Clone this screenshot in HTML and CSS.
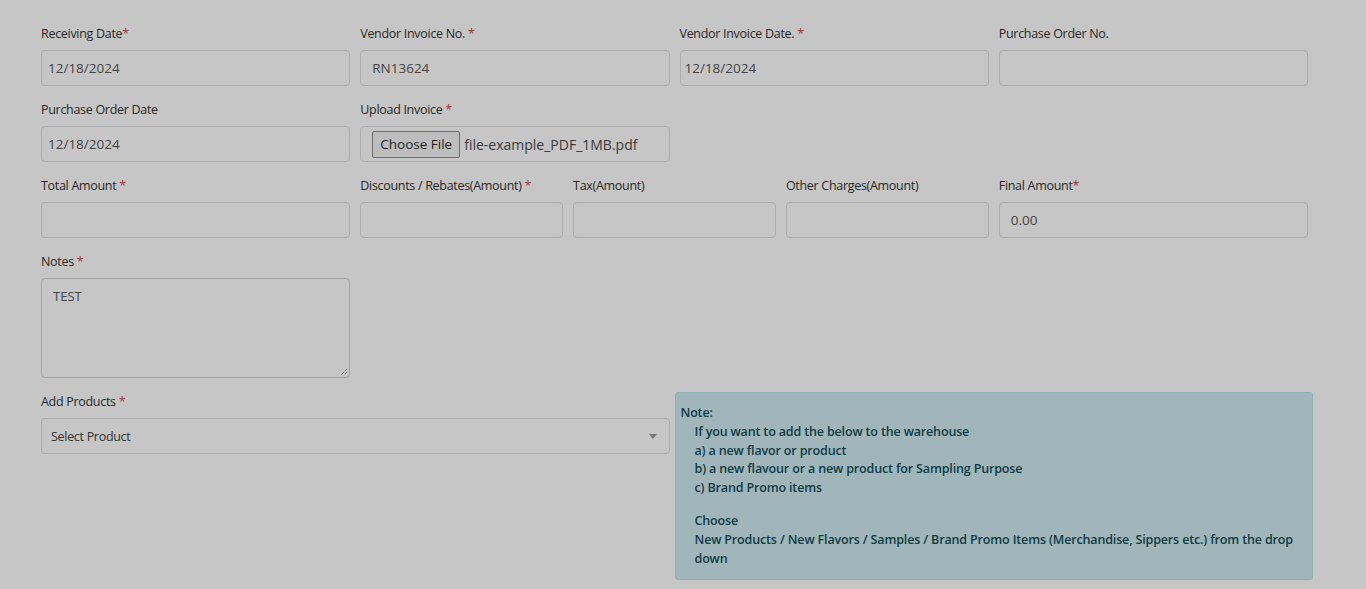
FILE: index.html
```html
<!DOCTYPE html>
<html>
<head>
<meta charset="utf-8">
<link rel="stylesheet" href="styles.css">
</head>
<body>
<div class="page">
  <div class="row">
    <div class="field">
      <label>Receiving Date<span class="req">*</span></label>
      <div class="input">12/18/2024</div>
    </div>
    <div class="field">
      <label>Vendor Invoice No. <span class="req">*</span></label>
      <div class="input pad-l">RN13624</div>
    </div>
    <div class="field">
      <label>Vendor Invoice Date. <span class="req">*</span></label>
      <div class="input tight">12/18/2024</div>
    </div>
    <div class="field">
      <label>Purchase Order No.</label>
      <div class="input"></div>
    </div>
  </div>
  <div class="row">
    <div class="field">
      <label>Purchase Order Date</label>
      <div class="input">12/18/2024</div>
    </div>
    <div class="field">
      <label>Upload Invoice <span class="req">*</span></label>
      <div class="input file"><span class="btn">Choose File</span><span class="fname">file-example_PDF_1MB.pdf</span></div>
    </div>
  </div>
  <div class="row">
    <div class="field">
      <label>Total Amount <span class="req">*</span></label>
      <div class="input"></div>
    </div>
    <div class="field span2">
      <div class="sub3">
        <div class="field">
          <label>Discounts / Rebates(Amount) <span class="req">*</span></label>
          <div class="input"></div>
        </div>
        <div class="field">
          <label>Tax(Amount)</label>
          <div class="input"></div>
        </div>
        <div class="field">
          <label>Other Charges(Amount)</label>
          <div class="input"></div>
        </div>
      </div>
    </div>
    <div class="field">
      <label>Final Amount<span class="req">*</span></label>
      <div class="input pad-l">0.00</div>
    </div>
  </div>
  <div class="row">
    <div class="field">
      <label>Notes <span class="req">*</span></label>
      <div class="textarea">TEST
        <svg class="grip" width="9" height="9" viewBox="0 0 9 9"><path d="M8 2 L2 8 M8 5 L5 8" stroke="#555" stroke-width="1" stroke-dasharray="1 1"/></svg>
      </div>
    </div>
  </div>
  <div class="row last">
    <div class="field span2">
      <label>Add Products <span class="req">*</span></label>
      <div class="input select"><span>Select Product</span><span class="arrow"></span></div>
    </div>
    <div class="note">
      <div>Note:</div>
      <div class="ind">If you want to add the below to the warehouse</div>
      <div class="ind">a) a new flavor or product</div>
      <div class="ind">b) a new flavour or a new product for Sampling Purpose</div>
      <div class="ind">c) Brand Promo items</div>
      <div class="ind gap">Choose</div>
      <div class="ind">New Products / New Flavors / Samples / Brand Promo Items (Merchandise, Sippers etc.) from the drop down</div>
    </div>
  </div>
</div>
</body>
</html>
```

FILE: styles.css
```css
* { box-sizing: border-box; }
html, body { margin: 0; padding: 0; }
body {
  background: #c6c6c6;
  font-family: "Open Sans", "Noto Sans", sans-serif;
  font-size: 12.5px;
  color: #2b2b2b;
  height: 589px;
  overflow: hidden;
}
.page {
  padding: 24px 0 0 41px;
  width: 1308px;
}
.row {
  display: grid;
  grid-template-columns: repeat(4, 1fr);
  column-gap: 10px;
  margin-bottom: 14px;
}
.field { display: flex; flex-direction: column; }
.span2 { grid-column: span 2; }
label {
  height: 18px;
  line-height: 18px;
  padding-top: 1px;
  box-sizing: content-box;
  margin-bottom: 7px;
  color: #262626;
  letter-spacing: -0.3px;
}
.req { color: #9a3a3a; }
.input {
  height: 36px;
  border: 1px solid #adadad;
  border-radius: 4px;
  background: #c6c6c6;
  display: flex;
  align-items: center;
  padding: 0 6px;
  font-size: 13.5px;
  color: #444;
}
.input.pad-l { padding-left: 11px; }
.input.tight { padding-left: 4px; }
.sub3 {
  display: grid;
  grid-template-columns: repeat(3, 1fr);
  column-gap: 10px;
}
.file { padding-left: 11px; }
.btn {
  display: inline-flex;
  align-items: center;
  height: 27px;
  padding: 0 7px;
  border: 1px solid #6d6d6d;
  border-radius: 2px;
  background: #bdbdbd;
  color: #1f1f1f;
  font-size: 13.5px;
  margin-right: 4px;
}
.fname { color: #3a3a3a; font-size: 14px; }
.textarea {
  position: relative;
  height: 100px;
  border: 1px solid #a2a2a2;
  border-radius: 4px;
  padding: 8px 11px;
  font-size: 13px;
  color: #444;
}
.grip { position: absolute; right: 1px; bottom: 1px; }
.row.last { align-items: start; }
.select {
  justify-content: space-between;
  padding: 0 12px 0 9px;
  color: #333;
  font-size: 12.5px;
  letter-spacing: -0.3px;
}
.arrow {
  width: 0; height: 0;
  border-left: 4px solid transparent;
  border-right: 4px solid transparent;
  border-top: 5px solid #777;
}
.note {
  grid-column: span 2;
  margin-left: -5px;
  margin-right: -5px;
  margin-top: 0;
  background: #a1b6ba;
  border: 1px solid #8fb0b5;
  border-radius: 3px;
  padding: 11px 6px 11px 5px;
  color: #0e3b44;
  font-weight: 600;
  font-size: 12.5px;
  line-height: 18.8px;
  letter-spacing: -0.15px;
}
.note .ind { padding-left: 14px; }
.note .gap { margin-top: 14px; }
```
